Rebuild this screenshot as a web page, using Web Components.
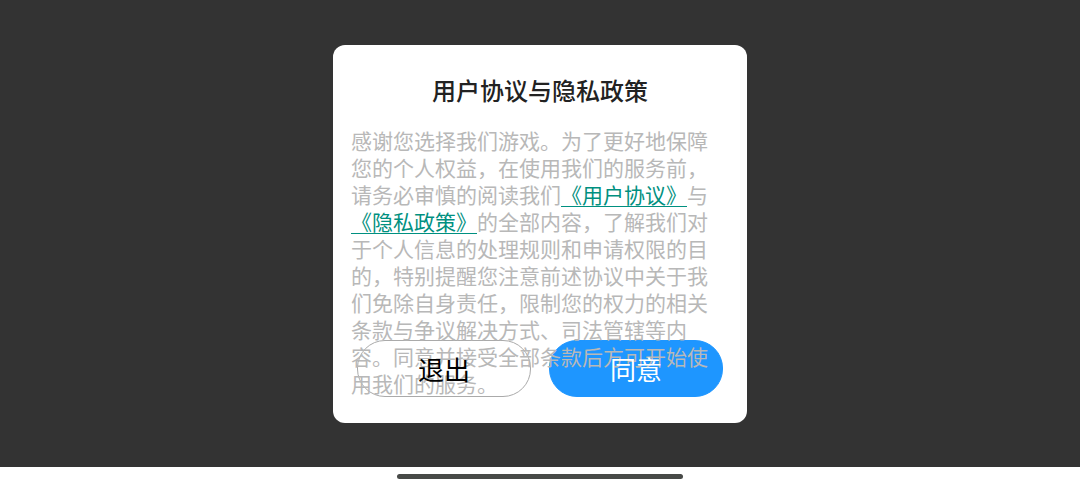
<!DOCTYPE html>
<html lang="zh-CN">
<head>
<meta charset="utf-8">
<meta name="viewport" content="width=device-width, initial-scale=1">
<title>用户协议与隐私政策</title>
<style>
    html, body {
        height: 100%;
        margin: 0;
    }
    body {
        font-family: "Noto Sans CJK SC", sans-serif;
        background: #fff;
    }
</style>
</head>
<body>
<game-screen>
    <consent-dialog heading="用户协议与隐私政策">
        感谢您选择我们游戏。为了更好地保障您的个人权益，在使用我们的服务前，请务必审慎的阅读我们<policy-link href="#agreement">《用户协议》</policy-link>与<policy-link href="#privacy">《隐私政策》</policy-link>的全部内容，了解我们对于个人信息的处理规则和申请权限的目的，特别提醒您注意前述协议中关于我们免除自身责任，限制您的权力的相关条款与争议解决方式、司法管辖等内容。同意并接受全部条款后方可开始使用我们的服务。
        <pill-button slot="actions">退出</pill-button>
        <pill-button slot="actions" primary>同意</pill-button>
    </consent-dialog>
</game-screen>
<script>
// Attach an open shadow root with the given markup.
function render(el, html) {
    const template = document.createElement('template');
    template.innerHTML = html;
    el.attachShadow({ mode: 'open' }).appendChild(template.content.cloneNode(true));
}

// Dark backdrop with the system gesture bar below it.
class GameScreen extends HTMLElement {
    constructor() {
        super();
        render(this, `
<style>
    :host {
        display: flex;
        flex-direction: column;
        min-height: 100%;
    }
    main {
        flex: 1;
        display: flex;
        align-items: center;
        justify-content: center;
        background: #333;
    }
    footer {
        display: flex;
        justify-content: center;
        padding: 7px 0;
    }
    .handle {
        width: 286px;
        height: 5px;
        border-radius: 3px;
        background: #484a48;
    }
</style>
<main><slot></slot></main>
<footer><div class="handle"></div></footer>`);
    }
}

// The body text and the actions share one grid cell, the actions at its bottom.
class ConsentDialog extends HTMLElement {
    constructor() {
        super();
        render(this, `
<style>
    :host {
        display: block;
        box-sizing: border-box;
        width: 414px;
        max-width: 100%;
        padding: 27px 18px 26px;
        border-radius: 12px;
        background: #fff;
    }
    h1 {
        margin: 0 0 19px;
        font-size: 24px;
        line-height: 36px;
        font-weight: 500;
        text-align: center;
        color: #222;
    }
    .content {
        display: grid;
        isolation: isolate;
    }
    .text, .actions {
        grid-area: 1 / 1;
    }
    /* Sits between the button faces (0) and their labels (2). */
    .text {
        z-index: 1;
        margin: 0;
        padding-right: 18px;
        font-size: 21px;
        line-height: 27px;
        text-spacing-trim: space-all;
        color: #b8b8b8;
        pointer-events: none;
    }
    .actions {
        align-self: end;
        display: flex;
        gap: 18px;
        padding: 0 6px;
    }
</style>
<h1></h1>
<div class="content">
    <p class="text"><slot></slot></p>
    <div class="actions"><slot name="actions"></slot></div>
</div>`);
    }
    connectedCallback() {
        this.shadowRoot.querySelector('h1').textContent = this.getAttribute('heading');
        this.setAttribute('role', 'dialog');
    }
}

// Inline link to a legal document. No whitespace around <a>, it would show in the text.
class PolicyLink extends HTMLElement {
    constructor() {
        super();
        render(this, `<style>
    :host {
        display: inline;
        pointer-events: auto;
    }
    a {
        color: #009080;
        text-decoration: underline 1px;
        text-underline-offset: 3px;
    }
</style><a><slot></slot></a>`);
    }
    connectedCallback() {
        this.shadowRoot.querySelector('a').href = this.getAttribute('href');
    }
}

// Rounded action button, filled when primary.
class PillButton extends HTMLElement {
    constructor() {
        super();
        render(this, `
<style>
    :host {
        display: block;
        flex: 1;
    }
    button {
        display: block;
        position: relative;
        width: 100%;
        height: 57px;
        padding: 0;
        border: 0;
        background: none;
        color: #000;
        font-family: inherit;
        font-size: 26px;
        cursor: pointer;
    }
    button::before {
        content: "";
        position: absolute;
        inset: 0;
        z-index: 0;
        border: 1px solid #aaa;
        border-radius: 28px;
        background: #fff;
    }
    span {
        position: relative;
        z-index: 2;
    }
    :host([primary]) button {
        color: #fff;
    }
    :host([primary]) button::before {
        border-color: #1e96ff;
        background: #1e96ff;
    }
</style>
<button type="button"><span><slot></slot></span></button>`);
    }
}

customElements.define('game-screen', GameScreen);
customElements.define('consent-dialog', ConsentDialog);
customElements.define('policy-link', PolicyLink);
customElements.define('pill-button', PillButton);
</script>
</body>
</html>
